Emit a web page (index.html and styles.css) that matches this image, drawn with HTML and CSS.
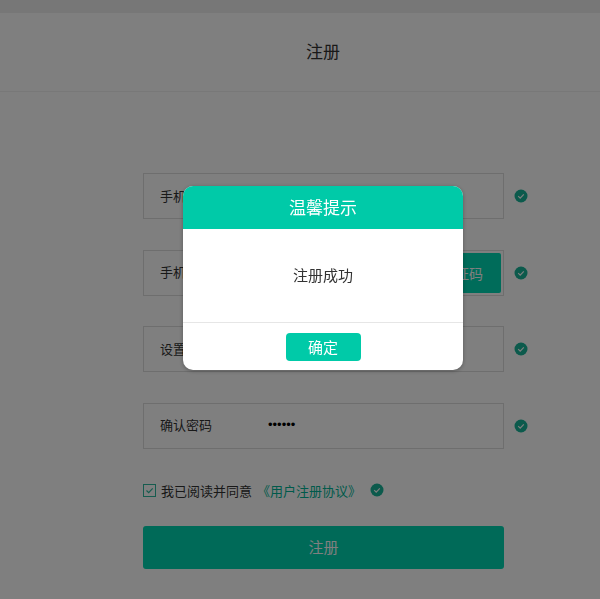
FILE: index.html
```html
<!DOCTYPE html>
<html lang="zh-CN">
<head>
    <meta charset="UTF-8">
    <meta name="viewport" content="width=device-width, initial-scale=1.0">
    <title>注册</title>
    <link rel="stylesheet" href="styles.css">
</head>
<body>
    <div class="top-strip"></div>
    <header class="page-header">注册</header>

    <form class="register-form">
        <div class="form-row">
            <label class="field">
                <span class="field-label">手机号码</span>
                <input class="field-input" type="text">
            </label>
            <svg class="ok-icon" viewBox="0 0 14 14"><circle cx="7" cy="7" r="6.5"/><path d="M4.2 7.1l2 2 3.6-3.8"/></svg>
        </div>
        <div class="form-row">
            <label class="field">
                <span class="field-label">手机验证</span>
                <input class="field-input" type="text">
                <button class="code-btn" type="button">获取验证码</button>
            </label>
            <svg class="ok-icon" viewBox="0 0 14 14"><circle cx="7" cy="7" r="6.5"/><path d="M4.2 7.1l2 2 3.6-3.8"/></svg>
        </div>
        <div class="form-row">
            <label class="field">
                <span class="field-label">设置密码</span>
                <input class="field-input" type="password" value="123456">
            </label>
            <svg class="ok-icon" viewBox="0 0 14 14"><circle cx="7" cy="7" r="6.5"/><path d="M4.2 7.1l2 2 3.6-3.8"/></svg>
        </div>
        <div class="form-row">
            <label class="field">
                <span class="field-label">确认密码</span>
                <input class="field-input" type="password" value="123456">
            </label>
            <svg class="ok-icon" viewBox="0 0 14 14"><circle cx="7" cy="7" r="6.5"/><path d="M4.2 7.1l2 2 3.6-3.8"/></svg>
        </div>

        <div class="agree-row">
            <svg class="agree-box" viewBox="0 0 13 13"><rect x="0.5" y="0.5" width="12" height="12"/><path d="M3.5 6.5l2.2 2.2 4-4.4"/></svg>
            <span class="agree-text">我已阅读并同意</span>
            <a class="agree-link">《用户注册协议》</a>
            <svg class="ok-icon" viewBox="0 0 14 14"><circle cx="7" cy="7" r="6.5"/><path d="M4.2 7.1l2 2 3.6-3.8"/></svg>
        </div>

        <button class="submit-btn" type="button">注册</button>
    </form>

    <div class="overlay">
        <div class="modal">
            <div class="modal-title">温馨提示</div>
            <div class="modal-body">注册成功</div>
            <div class="modal-footer">
                <button class="modal-btn" type="button">确定</button>
            </div>
        </div>
    </div>
</body>
</html>
```

FILE: styles.css
```css
* {
    box-sizing: border-box;
}

html,
body {
    height: 100%;
    overflow: hidden;
}

body {
    margin: 0;
    background-color: #fff;
    color: #333;
    font-family: "Liberation Sans", "Noto Sans CJK SC", sans-serif;
    font-size: 13px;
}

.top-strip {
    height: 13px;
    background-color: #eee;
}

.page-header {
    height: 79px;
    padding-left: 46px;
    border-bottom: 1px solid #f0f0f0;
    background-color: #fff;
    font-size: 17px;
    line-height: 79px;
    text-align: center;
}

.register-form {
    width: 361px;
    margin: 81px 0 0 143px;
}

.form-row {
    height: 46px;
    margin-bottom: 30.5px;
    display: flex;
    align-items: center;
}

.field {
    flex: none;
    width: 361px;
    height: 46px;
    display: flex;
    align-items: center;
    padding: 0 2px 2px 16px;
    border: 1px solid #ddd;
}

.field-label {
    width: 108px;
    flex: none;
}

.field-input {
    flex: 1;
    min-width: 0;
    border: none;
    outline: none;
    padding: 0;
    background: none;
    font-family: "Liberation Sans", sans-serif;
    font-size: 13px;
    color: #000;
}

.code-btn {
    width: 106px;
    height: 40px;
    flex: none;
    margin-top: 3px;
    border: none;
    border-radius: 2px;
    background-color: #00d8b4;
    color: #fff;
    font: inherit;
    font-size: 14px;
}

.ok-icon {
    width: 14px;
    height: 14px;
    flex: none;
    margin-left: 10px;
}

.ok-icon circle {
    fill: #18b498;
}

.ok-icon path {
    fill: none;
    stroke: #fff;
    stroke-width: 1.2;
}

.agree-row {
    display: flex;
    align-items: center;
    height: 20px;
    margin-top: 31.5px;
}

.agree-box {
    width: 13px;
    height: 13px;
    flex: none;
    margin-right: 5px;
}

.agree-box rect {
    fill: #fff;
    stroke: #2cb89f;
}

.agree-box path {
    fill: none;
    stroke: #2cb89f;
    stroke-width: 1.2;
}

.agree-link {
    margin-left: 5px;
    color: #00b596;
}

.agree-row .ok-icon {
    margin-left: 9px;
}

.submit-btn {
    display: block;
    width: 361px;
    height: 43px;
    margin-top: 26px;
    padding: 0 0 2px;
    border: none;
    border-radius: 3px;
    background-color: #00d4b0;
    color: #fff;
    font: inherit;
    font-size: 15px;
}

.overlay {
    position: fixed;
    top: 0;
    right: 0;
    bottom: 0;
    left: 0;
    padding: 186px 0 0 183px;
    background-color: rgba(0, 0, 0, 0.5);
}

.modal {
    width: 280px;
    height: 184px;
    border-radius: 10px;
    overflow: hidden;
    background-color: #fff;
    box-shadow: 0 1px 4px rgba(0, 0, 0, 0.3);
}

.modal-title {
    height: 43px;
    padding-top: 1px;
    background-color: #00caa8;
    color: #fff;
    font-size: 17px;
    line-height: 44px;
    text-align: center;
}

.modal-body {
    height: 94px;
    border-bottom: 1px solid #e6e6e6;
    font-size: 15px;
    line-height: 94px;
    text-align: center;
}

.modal-footer {
    padding-top: 10px;
    text-align: center;
}

.modal-btn {
    width: 75px;
    height: 28px;
    padding: 0 0 2px;
    border: none;
    border-radius: 4px;
    background-color: #00caa8;
    color: #fff;
    font: inherit;
    font-size: 15px;
}
```
